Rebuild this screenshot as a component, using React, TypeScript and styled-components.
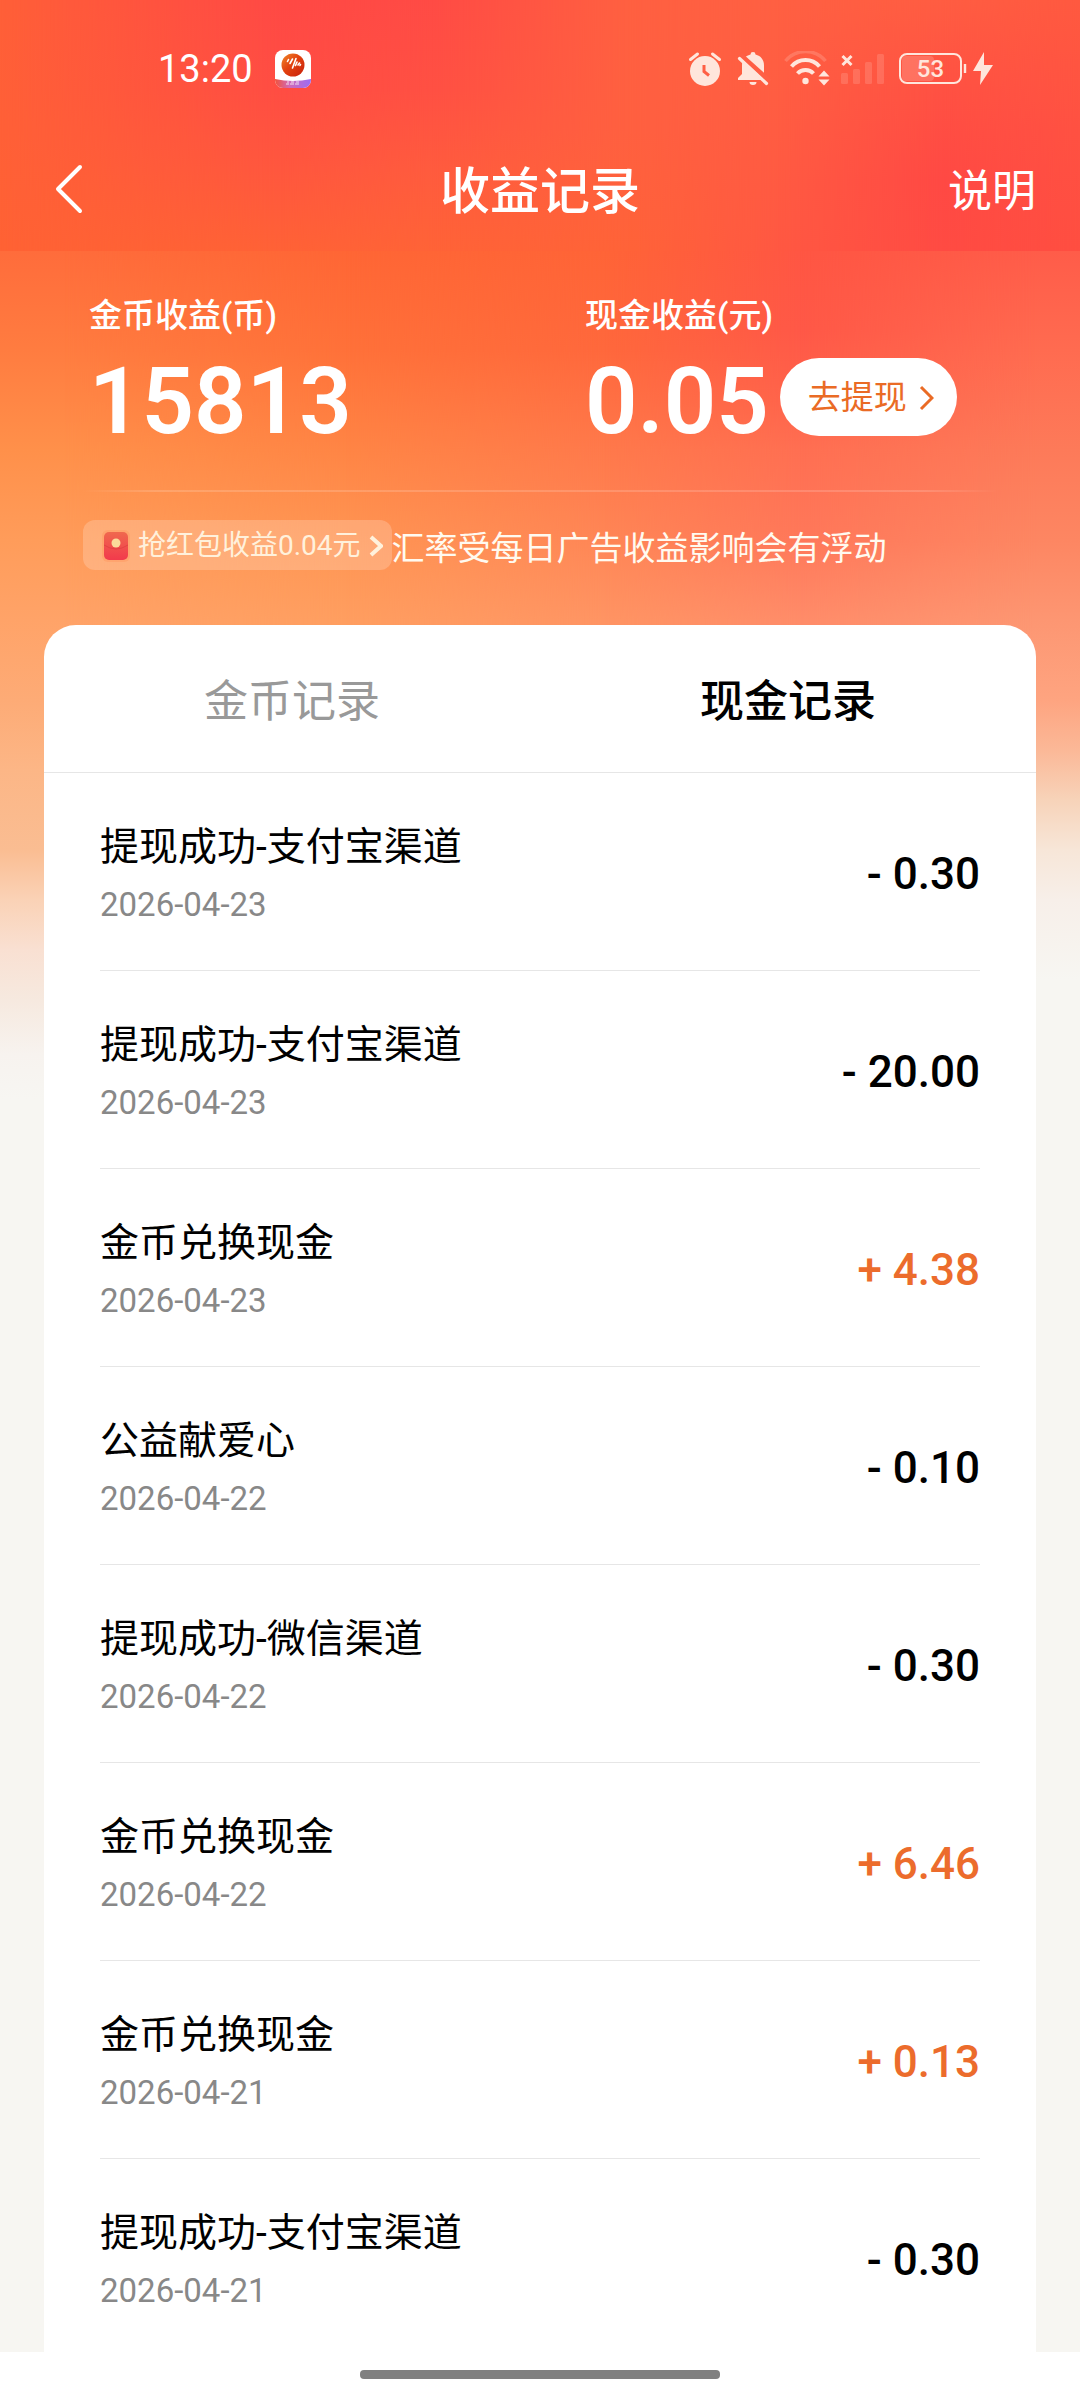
import React, { useState } from "react";
import styled, { createGlobalStyle } from "styled-components";

const GlobalStyle = createGlobalStyle`
  *, *::before, *::after { box-sizing: border-box; }
  body {
    margin: 0;
    background: #f7f6f2;
    font-family: Roboto, "Noto Sans CJK SC", sans-serif;
    color: #000;
  }
  button {
    border: 0;
    padding: 0;
    background: none;
    color: inherit;
    font: inherit;
    cursor: pointer;
  }
  h1, p, ul { margin: 0; padding: 0; }
  ul { list-style: none; }
`;

const Screen = styled.div`
  position: relative;
  isolation: isolate;
  display: flex;
  flex-direction: column;
  height: 100vh;
`;

/* The colour field is a row of vertical gradients that fade into each other. */
const Field = styled.div<{ $height: number }>`
  position: absolute;
  inset: 0 0 auto;
  height: ${(p) => p.$height}px;
  z-index: -1;
  overflow: hidden;
`;

const Wash = styled.div<{ $stops: string; $from?: number; $to?: number }>`
  position: absolute;
  inset: 0;
  background: linear-gradient(to bottom, ${(p) => p.$stops});
  ${(p) =>
    p.$to !== undefined &&
    `mask-image: linear-gradient(to right, transparent ${p.$from}%, #000 ${p.$to}%);`}
`;

const Header = styled.header`
  position: relative;
  isolation: isolate;
  color: #fff;
`;

const StatusBar = styled.div`
  display: flex;
  align-items: center;
  justify-content: space-between;
  height: 132px;
  padding: 6px 86px 0 158px;
`;

const StatusGroup = styled.div<{ $gap: number }>`
  display: flex;
  align-items: center;
  gap: ${(p) => p.$gap}px;
`;

const Clock = styled.time`
  font-size: 38px;
  line-height: 44px;
`;

const NavBar = styled.nav`
  display: grid;
  grid-template-columns: 1fr auto 1fr;
  align-items: center;
  height: 119px;
  padding: 0 44px;
`;

const BackButton = styled.button`
  justify-self: start;
  display: flex;
  padding: 0 12px 6px 10px;
`;

const Title = styled.h1`
  font-size: 50px;
  line-height: 64px;
  font-weight: 500;
`;

const HelpLink = styled.a`
  justify-self: end;
  color: inherit;
  font-size: 44px;
  line-height: 64px;
  text-decoration: none;
`;

const Overview = styled.section`
  padding: 45px 44px 55px;
  color: #fff;
`;

const Balances = styled.div`
  display: grid;
  grid-template-columns: 1fr 1fr;
`;

const Balance = styled.div`
  display: flex;
  flex-direction: column;
  gap: 22px;
  padding-left: 45px;
`;

const BalanceLabel = styled.p`
  font-size: 33px;
  line-height: 40px;
  font-weight: 500;
`;

const BalanceLine = styled.div`
  display: flex;
  align-items: center;
  gap: 11px;
  height: 78px;
`;

const BalanceValue = styled.strong`
  padding-top: 10px;
  font-size: 92px;
  line-height: 78px;
  font-weight: 600;
`;

const WithdrawButton = styled.button`
  display: flex;
  align-items: center;
  gap: 12px;
  height: 78px;
  padding: 2px 23px 0 28px;
  border-radius: 39px;
  background: #fff;
  color: #ea6b25;
  font-size: 33px;
  line-height: 40px;
  white-space: nowrap;
`;

const Divider = styled.div`
  height: 2px;
  margin: 54px 38px 28px;
  background: linear-gradient(to right, transparent, rgba(255, 255, 255, 0.16) 8%, rgba(255, 255, 255, 0.16) 92%, transparent);
`;

const NoteLine = styled.div`
  display: flex;
  align-items: center;
  padding-left: 39px;
`;

const PacketTag = styled.button`
  display: flex;
  align-items: center;
  gap: 8px;
  height: 50px;
  padding: 2px 9px 0 19px;
  border-radius: 12px;
  background: rgba(255, 255, 255, 0.2);
  color: #fff1dc;
  font-size: 28px;
  line-height: 40px;
  white-space: nowrap;
`;

const Note = styled.p`
  padding-top: 8px;
  color: #fffaf0;
  font-size: 33px;
  line-height: 42px;
`;

const Card = styled.main`
  display: flex;
  flex: 1;
  flex-direction: column;
  min-height: 400px;
  margin: 0 44px;
  overflow: hidden;
  border-radius: 32px 32px 0 0;
  background: #fff;
`;

const Tabs = styled.div`
  display: grid;
  flex: none;
  grid-template-columns: 1fr 1fr;
  height: 148px;
  border-bottom: 1px solid #e6e6e6;
`;

const Tab = styled.button<{ $active: boolean }>`
  padding-top: 7px;
  color: ${(p) => (p.$active ? "#000" : "#999")};
  font-size: 44px;
  line-height: 56px;
  font-weight: ${(p) => (p.$active ? 500 : 400)};
`;

const Records = styled.ul`
  flex: 1;
  min-height: 0;
  padding: 0 56px;
  overflow-y: auto;
  scrollbar-width: none;
`;

const Record = styled.li`
  display: flex;
  align-items: center;
  justify-content: space-between;
  height: 198px;
  padding-top: 4px;
  border-bottom: 1px solid #e6e6e6;
`;

const RecordText = styled.div`
  display: flex;
  flex-direction: column;
  gap: 6px;
`;

const RecordName = styled.p`
  font-size: 39px;
  line-height: 56px;
`;

const RecordDate = styled.time`
  color: #888;
  font-size: 33px;
  line-height: 48px;
`;

const Amount = styled.span<{ $income: boolean }>`
  color: ${(p) => (p.$income ? "#ec6c2c" : "#000")};
  font-size: 44px;
  line-height: 56px;
  font-weight: 500;
`;

const GestureBar = styled.footer`
  display: flex;
  flex: none;
  justify-content: center;
  height: 48px;
  padding-top: 18px;
  background: #fff;
`;

const GestureHandle = styled.div`
  width: 360px;
  height: 9px;
  border-radius: 4px;
  background: #808080;
`;

const AppBadge = () => (
  <svg width="36" height="38" viewBox="0 0 36 38" aria-hidden="true">
    <defs>
      <linearGradient id="ball" x1="0" y1="0" x2="1" y2="1">
        <stop offset="0" stopColor="#f08a2a" />
        <stop offset="0.45" stopColor="#e2420f" />
        <stop offset="1" stopColor="#c8200c" />
      </linearGradient>
      <linearGradient id="ribbon" x1="0" y1="0" x2="1" y2="0">
        <stop offset="0" stopColor="#f0533c" />
        <stop offset="0.4" stopColor="#d06ab8" />
        <stop offset="1" stopColor="#9a6cf4" />
      </linearGradient>
      <clipPath id="tile">
        <rect width="36" height="38" rx="8" />
      </clipPath>
    </defs>
    <g clipPath="url(#tile)">
      <rect width="36" height="38" fill="#fff" />
      <path d="M0 29 Q18 33 36 29 V38 H0 Z" fill="url(#ribbon)" />
      <path d="M11 34h3m1 0h4m1 0h4M12 32h2m2 0h3m2 0h3" stroke="#fff" strokeWidth="1.2" opacity="0.8" />
    </g>
    <circle cx="18" cy="15" r="11.5" fill="url(#ball)" />
    <path d="M12.500 11.500l1-2M15 13.500l2.500-4.500M17.500 18l3.500-9.500M20.500 15.500l1.500-3.500M23 15l1.500-2M25 15.500l.5-1" stroke="#fff" strokeWidth="1.6" strokeLinecap="round" fill="none" />
  </svg>
);

const STATUS_INK = "#ffe6dc";

const StatusIcons = () => (
  <svg width="306" height="36" viewBox="688 51 306 36" role="img" aria-label="闹钟 静音 WLAN 无信号 充电中">
    {/* alarm clock */}
    <circle cx="705" cy="71" r="15" fill={STATUS_INK} />
    <path d="M704 65v6.500l5 4" stroke="#ff5f45" strokeWidth="3" fill="none" />
    <path d="M690.500 59.500l7-5.500M719.500 59.500l-7-5.500" stroke={STATUS_INK} strokeWidth="3" strokeLinecap="round" />
    {/* muted bell */}
    <path d="M753 52a2.500 2.500 0 0 1 2.500 2.600C761 56 764 60 764 65.500V74l4 4v2H738v-2l4-4v-8.500C742 60 745 56 750.500 54.600A2.500 2.500 0 0 1 753 52Z" fill={STATUS_INK} />
    <path d="M749.500 82h7a3.500 3 0 0 1-7 0Z" fill={STATUS_INK} />
    <path d="M740 54.500l30 27" stroke="#ff5f45" strokeWidth="5" />
    <path d="M739.500 58.500l27 25" stroke={STATUS_INK} strokeWidth="3.200" strokeLinecap="round" />
    {/* wifi with traffic arrows */}
    <path d="M785.500 61a26 26 0 0 1 40 0" stroke={STATUS_INK} strokeWidth="3.500" opacity="0.2" fill="none" />
    <path d="M791.500 66.500a18.500 18.500 0 0 1 28 0" stroke={STATUS_INK} strokeWidth="4" fill="none" />
    <path d="M797.500 73.500a11 11 0 0 1 16 0" stroke={STATUS_INK} strokeWidth="4" fill="none" />
    <circle cx="805.500" cy="81" r="3.200" fill={STATUS_INK} />
    <path d="M818.500 76.500l5.500-6 5.500 6ZM818.500 79.500l5.500 6 5.500-6Z" fill={STATUS_INK} />
    {/* no cellular signal */}
    <path d="M842.500 56l9 9M851.500 56l-9 9" stroke={STATUS_INK} strokeWidth="3" />
    <g fill={STATUS_INK} opacity="0.16">
      <rect x="841" y="73" width="7" height="11" rx="1.500" />
      <rect x="853" y="69" width="7" height="15" rx="1.500" />
      <rect x="865" y="62" width="7" height="22" rx="1.500" />
      <rect x="877" y="54" width="7" height="30" rx="1.500" />
    </g>
    {/* battery */}
    <rect x="902" y="56" width="32" height="25" rx="4" fill={STATUS_INK} opacity="0.2" />
    <rect x="900" y="54" width="61" height="29" rx="7" stroke={STATUS_INK} strokeWidth="2" fill="none" />
    <path d="M965 64v9" stroke={STATUS_INK} strokeWidth="2.400" />
    <text x="930.500" y="77" textAnchor="middle" fontFamily="Roboto, sans-serif" fontSize="24" fontWeight="500" fill={STATUS_INK}>53</text>
    {/* charging bolt */}
    <path d="M984 52l-11 19h8l-1 14 13-20h-9Z" fill={STATUS_INK} />
  </svg>
);

const BackIcon = () => (
  <svg width="30" height="52" viewBox="0 0 30 52" fill="none" stroke="#fff" strokeWidth="4" strokeLinecap="round" strokeLinejoin="round" aria-hidden="true">
    <path d="M26 4L4 26l22 22" />
  </svg>
);

const Chevron = ({ width, height, weight }: { width: number; height: number; weight: number }) => (
  <svg width={width} height={height} viewBox={`0 0 ${width} ${height}`} fill="none" stroke="currentColor" strokeWidth={weight} aria-hidden="true">
    <path d={`M2 2L${width - 2} ${height / 2}L2 ${height - 2}`} />
  </svg>
);

const PacketIcon = () => (
  <svg width="28" height="32" viewBox="0 0 28 32" aria-hidden="true">
    <defs>
      <linearGradient id="packet" x1="0" y1="0" x2="0" y2="1">
        <stop offset="0" stopColor="#f0684e" />
        <stop offset="1" stopColor="#f23a4c" />
      </linearGradient>
    </defs>
    <rect width="28" height="32" rx="6" fill="#ff9a62" opacity="0.5" />
    <rect x="2" y="2" width="24" height="28" rx="5" fill="url(#packet)" />
    <path d="M2 15q12 8 24 0" stroke="#d83a3c" strokeWidth="1" fill="none" opacity="0.6" />
    <circle cx="14" cy="13" r="4.500" fill="#fbdc9a" />
  </svg>
);

const HEADER_WASHES = [
  { stops: "#ff5f38 0, #ff6037 130px, #ff6234 251px" },
  { stops: "#ff4945 0, #ff4d43 90px, #ff573e 170px, #ff6236 251px", from: 0, to: 26 },
  { stops: "#ff4b45 0, #ff5043 90px, #ff5b3e 170px, #ff6337 251px", from: 26, to: 40 },
  { stops: "#ff6041 0, #ff6040 130px, #ff6338 251px", from: 40, to: 58 },
  { stops: "#ff6042 0, #ff5c42 130px, #ff5842 251px", from: 58, to: 72 },
  { stops: "#ff5d42 0, #ff5143 90px, #ff4944 180px, #ff4b43 251px", from: 72, to: 87 },
  { stops: "#ff5940 0, #ff5142 130px, #ff4e41 251px", from: 87, to: 100 },
];

const PAGE_WASHES = [
  {
    stops:
      "#ff6c3b 251px, #ff7c40 350px, #ff904a 450px, #ff9c5a 540px, #ffa368 620px, #fdab76 700px, #fcb686 770px, #fabd92 850px, #fad2b6 900px, #f9e0d2 950px, #f6e9df 1000px, #f7f3ef 1055px, #f7f6f2 1100px",
  },
  { stops: "#ff6635 251px, #ff7139 350px, #ff8545 450px, #ff9553 540px, #ff9e60 620px", from: 6, to: 32 },
  { stops: "#ff6437 251px, #ff683c 350px, #ff794b 450px, #ff8656 540px, #ff9463 620px", from: 32, to: 56 },
  { stops: "#ff5643 251px, #ff5847 330px, #ff634b 400px, #ff6f52 450px, #ff785a 540px, #ff8c69 620px", from: 56, to: 74 },
  {
    stops:
      "#ff5c49 251px, #ff6b50 350px, #fd7a59 450px, #fd8662 540px, #fd9672 620px, #fea480 700px, #fbb897 750px, #f7d3b9 800px, #f7e6d8 850px, #f7efe9 900px, #f7f6f2 980px",
    from: 74,
    to: 96,
  },
];

type Entry = { name: string; date: string; amount: string };

const CASH: Entry[] = [
  { name: "提现成功-支付宝渠道", date: "2026-04-23", amount: "- 0.30" },
  { name: "提现成功-支付宝渠道", date: "2026-04-23", amount: "- 20.00" },
  { name: "金币兑换现金", date: "2026-04-23", amount: "+ 4.38" },
  { name: "公益献爱心", date: "2026-04-22", amount: "- 0.10" },
  { name: "提现成功-微信渠道", date: "2026-04-22", amount: "- 0.30" },
  { name: "金币兑换现金", date: "2026-04-22", amount: "+ 6.46" },
  { name: "金币兑换现金", date: "2026-04-21", amount: "+ 0.13" },
  { name: "提现成功-支付宝渠道", date: "2026-04-21", amount: "- 0.30" },
];

const TABS = [
  { id: "coin", label: "金币记录", entries: [] as Entry[] },
  { id: "cash", label: "现金记录", entries: CASH },
];

export default function App() {
  const [tab, setTab] = useState("cash");
  const current = TABS.find((t) => t.id === tab) ?? TABS[1];

  return (
    <>
      <GlobalStyle />
      <Screen>
        <Field $height={1100}>
          {PAGE_WASHES.map((w, i) => (
            <Wash key={i} $stops={w.stops} $from={w.from} $to={w.to} />
          ))}
        </Field>

        <Header>
          <Field $height={251}>
            {HEADER_WASHES.map((w, i) => (
              <Wash key={i} $stops={w.stops} $from={w.from} $to={w.to} />
            ))}
          </Field>
          <StatusBar>
            <StatusGroup $gap={22}>
              <Clock>13:20</Clock>
              <AppBadge />
            </StatusGroup>
            <StatusIcons />
          </StatusBar>
          <NavBar>
            <BackButton aria-label="返回">
              <BackIcon />
            </BackButton>
            <Title>收益记录</Title>
            <HelpLink href="#help">说明</HelpLink>
          </NavBar>
        </Header>

        <Overview>
          <Balances>
            <Balance>
              <BalanceLabel>金币收益(币)</BalanceLabel>
              <BalanceLine>
                <BalanceValue>15813</BalanceValue>
              </BalanceLine>
            </Balance>
            <Balance>
              <BalanceLabel>现金收益(元)</BalanceLabel>
              <BalanceLine>
                <BalanceValue>0.05</BalanceValue>
                <WithdrawButton>
                  去提现
                  <Chevron width={15} height={26} weight={3} />
                </WithdrawButton>
              </BalanceLine>
            </Balance>
          </Balances>
          <Divider />
          <NoteLine>
            <PacketTag>
              <PacketIcon />
              抢红包收益0.04元
              <Chevron width={14} height={22} weight={4} />
            </PacketTag>
            <Note>汇率受每日广告收益影响会有浮动</Note>
          </NoteLine>
        </Overview>

        <Card>
          <Tabs role="tablist">
            {TABS.map((t) => (
              <Tab key={t.id} role="tab" aria-selected={t.id === tab} $active={t.id === tab} onClick={() => setTab(t.id)}>
                {t.label}
              </Tab>
            ))}
          </Tabs>
          <Records>
            {current.entries.map((e, i) => (
              <Record key={i}>
                <RecordText>
                  <RecordName>{e.name}</RecordName>
                  <RecordDate dateTime={e.date}>{e.date}</RecordDate>
                </RecordText>
                <Amount $income={e.amount.startsWith("+")}>{e.amount}</Amount>
              </Record>
            ))}
          </Records>
        </Card>

        <GestureBar>
          <GestureHandle />
        </GestureBar>
      </Screen>
    </>
  );
}
